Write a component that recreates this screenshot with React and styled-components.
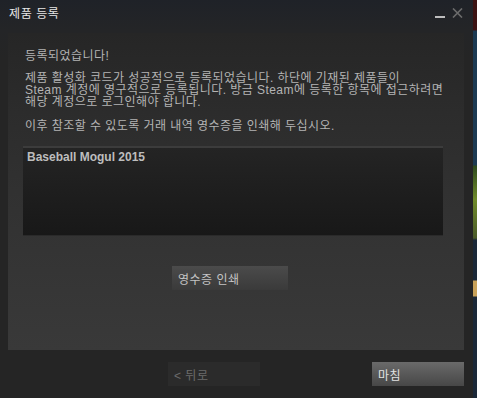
import React from "react";
import styled, { createGlobalStyle } from "styled-components";

const Global = createGlobalStyle`
  html, body { margin: 0; padding: 0; background: #1a2a3a; }
  body { font-family: "Liberation Sans", "Noto Sans CJK KR", sans-serif; }
`;

const Screen = styled.div`
  display: flex;
  width: 477px;
  height: 398px;
  overflow: hidden;
`;

const Window = styled.div`
  width: 473px;
  height: 398px;
  display: flex;
  flex-direction: column;
  background: linear-gradient(to bottom, #1f2228 0px, #242527 30px, #252525 60px, #252525 100%);
  font-size: 12px;
  color: #b4b4b4;
`;

const Desktop = styled.div`
  width: 4px;
  height: 398px;
  background: linear-gradient(
    to bottom,
    #3b1212 0px, #3b1212 30px,
    #1c3a52 31px, #1c3a52 165px,
    #2e4a1e 166px, #6f8a2a 200px, #4a5a2a 238px,
    #1b2838 240px, #1b2838 280px,
    #c9a25a 281px, #c9a25a 296px,
    #1b2838 297px, #1b2838 398px
  );
`;

const TitleBar = styled.div`
  height: 33px;
  box-sizing: border-box;
  padding: 8px 10px 0 9px;
  display: flex;
  align-items: flex-start;
  justify-content: space-between;
`;

const Title = styled.div`
  font-size: 12px;
  line-height: 12px;
  letter-spacing: 0.6px;
  color: #e6e6e6;
`;

const Controls = styled.div`
  display: flex;
  align-items: flex-start;
  gap: 7px;
`;

const Panel = styled.div`
  margin: 0 9px 0 8px;
  height: 317px;
  box-sizing: border-box;
  padding: 17px 17px 0 17px;
  background: linear-gradient(to bottom, #262626 0%, #2c2c2c 25%, #313131 50%, #393939 100%);
  display: flex;
  flex-direction: column;
`;

const Text = styled.div`
  line-height: 12px;
  letter-spacing: 0.45px;
  white-space: nowrap;
  margin-top: ${(p) => p.$mt || 0}px;
`;

const ListBox = styled.div`
  margin: 14px 0 0 -2px;
  width: 420px;
  height: 90px;
  box-sizing: border-box;
  border-top: 2px solid #3c3c3c;
  border-bottom: 1px solid #2a2a2a;
  background: linear-gradient(to bottom, #242424, #181818);
  padding: 3px 4px;
`;

const ItemName = styled.div`
  font-weight: bold;
  font-size: 12px;
  line-height: 12px;
  color: #bdbdbd;
`;

const Button = styled.div`
  width: ${(p) => p.$w}px;
  height: 24px;
  box-sizing: border-box;
  padding-left: 6px;
  display: flex;
  align-items: center;
  font-size: 12px;
  letter-spacing: 0.5px;
  color: ${(p) => p.$color};
  background: ${(p) => p.$bg};
`;

const PrintRow = styled.div`
  margin-top: 30px;
  padding-left: 147px;
`;

const Footer = styled.div`
  display: flex;
  padding: 12px 0 0 168px;
  gap: 112px;
`;

function App() {
  return (
    <>
      <Global />
      <Screen>
        <Window>
          <TitleBar>
            <Title>제품 등록</Title>
            <Controls>
              <svg width="10" height="10" viewBox="0 0 10 10">
                <rect x="0" y="8" width="10" height="2" fill="#bdbdbd" />
              </svg>
              <svg width="11" height="10" viewBox="0 0 11 10">
                <path d="M1 0.5 L10 9.5 M10 0.5 L1 9.5" stroke="#6c6c6c" strokeWidth="1.6" />
              </svg>
            </Controls>
          </TitleBar>
          <Panel>
            <Text>등록되었습니다!</Text>
            <Text $mt={10}>
              제품 활성화 코드가 성공적으로 등록되었습니다. 하단에 기재된 제품들이
            </Text>
            <Text>Steam 계정에 영구적으로 등록됩니다. 방금 Steam에 등록한 항목에 접근하려면</Text>
            <Text>해당 계정으로 로그인해야 합니다.</Text>
            <Text $mt={12}>이후 참조할 수 있도록 거래 내역 영수증을 인쇄해 두십시오.</Text>
            <ListBox>
              <ItemName>Baseball Mogul 2015</ItemName>
            </ListBox>
            <PrintRow>
              <Button $w={116} $color="#c4c4c4" $bg="linear-gradient(to bottom, #4b4b4b, #3a3a3a)">
                영수증 인쇄
              </Button>
            </PrintRow>
          </Panel>
          <Footer>
            <Button $w={92} $color="#6c6c6c" $bg="#2b2b2b">
              &lt; 뒤로
            </Button>
            <Button $w={92} $color="#e2e2e2" $bg="linear-gradient(to bottom, #6a6a6a, #474747)">
              마침
            </Button>
          </Footer>
        </Window>
        <Desktop />
      </Screen>
    </>
  );
}

export default App;
